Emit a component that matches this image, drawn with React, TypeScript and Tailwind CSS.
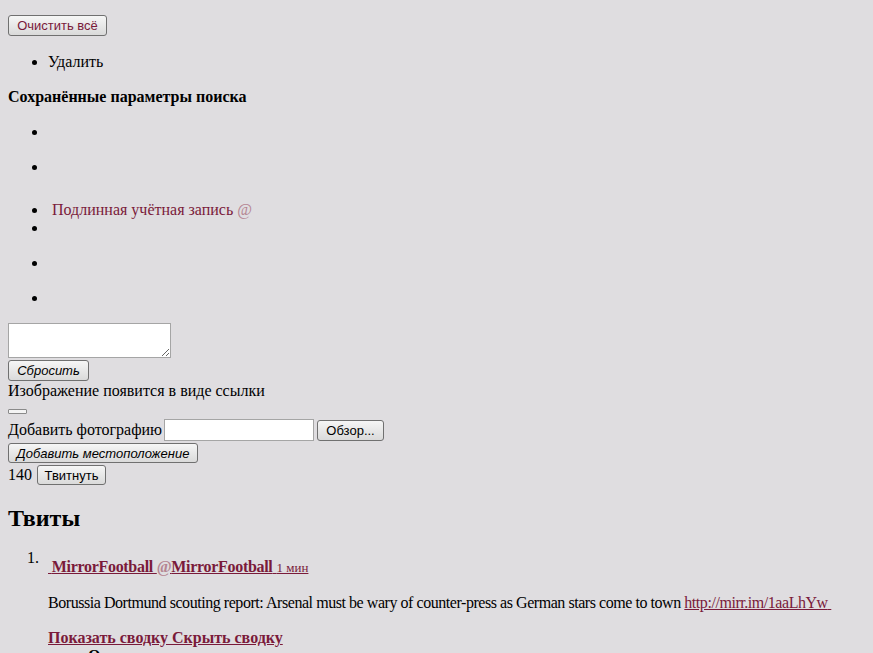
import type { JSX } from 'react';

const btn =
  "flex items-center justify-center rounded-[3px] border border-[#707070] bg-linear-to-b from-[#f6f6f6] to-[#dadada] font-['Liberation_Sans',Arial,sans-serif] text-[13px] leading-none";

function Bullet({ children, className }: { children?: React.ReactNode; className?: string }): JSX.Element {
  return (
    <li className={`h-[18px] ${className ?? ''}`}>{children ?? '\u00a0'}</li>
  );
}

export default function App(): JSX.Element {
  return (
    <div className="min-h-screen bg-[#dfdde0] px-[8px] pt-[15px] font-['Liberation_Serif','Times_New_Roman',serif] text-[16px] leading-[18px] text-black">
      <button type="button" className={`${btn} h-[21px] w-[99px] text-[#7a1a3a]`}>
        Очистить всё
      </button>

      <ul className="mt-[17px] list-disc pl-[40px]">
        <li>Удалить</li>
      </ul>

      <h4 className="mt-[17px] font-bold">Сохранённые параметры поиска</h4>

      <ul className="mt-[17px] list-disc pl-[40px]">
        <Bullet className="mb-[17px]" />
        <Bullet className="mb-[25px]" />
        <Bullet>
          <a className="text-[#7a1a3a]">
            {'\u00a0'}Подлинная учётная запись <span className="text-[#b58592]">@</span>
          </a>
        </Bullet>
        <Bullet className="mb-[17px]" />
        <Bullet className="mb-[17px]" />
        <Bullet />
      </ul>

      <textarea className="mt-[16px] block h-[35px] w-[163px] border border-[#a5a5a5] bg-white" />
      <button type="button" className={`${btn} mt-[2px] h-[21px] w-[81px] text-black italic`}>
        Сбросить
      </button>
      <div className="mt-[1px]">Изображение появится в виде ссылки</div>
      <button type="button" className="mt-[9px] block h-[5px] w-[19px] rounded-[1px] border border-[#8a8a8a] bg-[#f4f4f4]" />

      <div className="mt-[5px] flex items-center">
        <span>Добавить фотографию</span>
        <input className="ml-[2px] h-[22px] w-[150px] border border-[#a5a5a5] bg-white" />
        <button type="button" className={`${btn} ml-[3px] h-[21px] w-[67px] text-black`}>
          Обзор...
        </button>
      </div>

      <button type="button" className={`${btn} mt-[2px] h-[20px] w-[190px] text-black italic`}>
        Добавить местоположение
      </button>

      <div className="mt-[2px] flex items-center">
        <span>140</span>
        <button type="button" className={`${btn} ml-[5px] h-[20px] w-[69px] text-black`}>
          Твитнуть
        </button>
      </div>

      <h2 className="mt-[19px] text-[24px] leading-[28px] font-bold">Твиты</h2>

      <div className="mt-[17px] flex">
        <span className="w-[40px] shrink-0 pr-[9px] text-right">1.</span>
        <div className="flex-1 pt-[9px]">
          <a className="text-[#7a1a3a] underline">
            <b className="tracking-[-0.3px]">
              {'\u00a0'}MirrorFootball <span className="text-[#b58592]">@</span>MirrorFootball
            </b>{' '}
            <span className="text-[13px]">1 мин</span>
          </a>
          <p className="mt-[17px] tracking-[-0.45px] whitespace-nowrap">
            Borussia Dortmund scouting report: Arsenal must be wary of counter-press as German stars come to town{' '}
            <a className="text-[#7a1a3a] underline">http://mirr.im/1aaLhYw{'\u00a0'}</a>
          </p>
          <p className="mt-[17px] font-bold">
            <a className="text-[#7a1a3a] underline">Показать сводку Скрыть сводку</a>
          </p>
          <ul className="pl-[40px]">
            <li className="font-bold">Ответить</li>
          </ul>
        </div>
      </div>
    </div>
  );
}
